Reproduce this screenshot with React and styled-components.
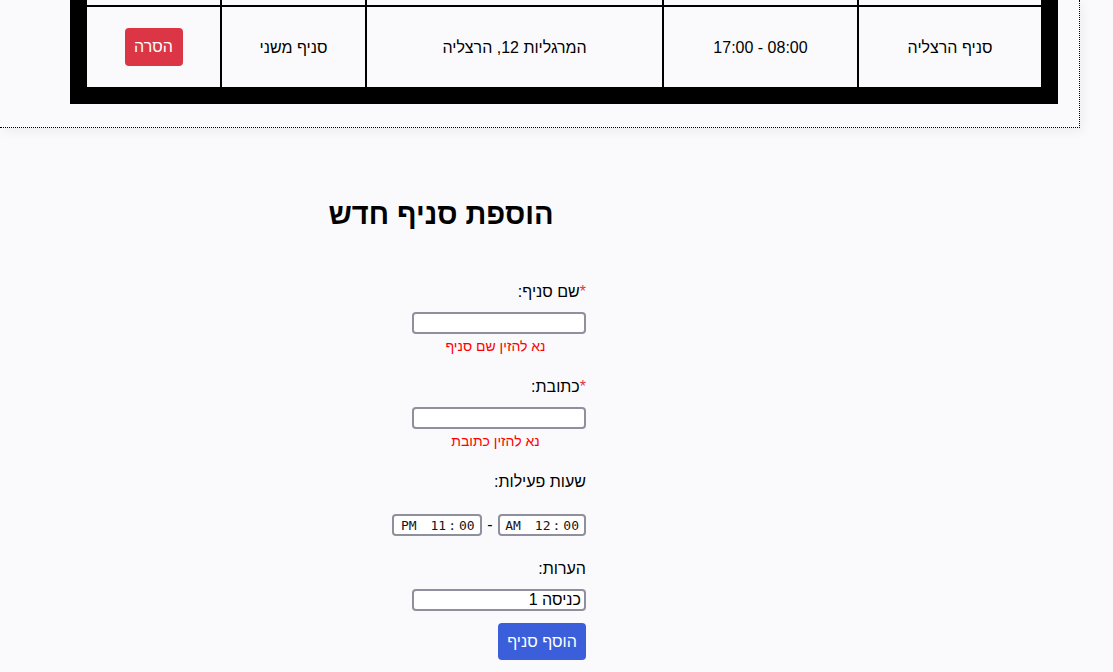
import styled, { createGlobalStyle } from "styled-components";

const GlobalStyle = createGlobalStyle`
  body {
    margin: 0;
    background: #fafafc;
    font-family: "Liberation Sans", Arial, sans-serif;
    color: #000;
  }
`;

const TableBox = styled.div`
  width: 1080px;
  box-sizing: border-box;
  padding: 0 21px 23px 70px;
  border-right: 1px dotted #000;
  border-bottom: 1px dotted #000;
  box-shadow: 3px 4px 10px rgba(0, 0, 0, 0.05);
`;

const Table = styled.table`
  direction: rtl;
  width: 988px;
  table-layout: fixed;
  border-collapse: separate;
  border-spacing: 0;
  border: 16px solid #000;
  border-top: 0;
`;

const Cell = styled.td`
  box-sizing: border-box;
  width: ${(p) => p.$w}px;
  height: ${(p) => (p.$stub ? 6 : 82)}px;
  padding: ${(p) => (p.$stub ? 0 : "2px 0 0")};
  border: 1px solid #000;
  border-top: ${(p) => (p.$stub ? 0 : "1px solid #000")};
  text-align: center;
  vertical-align: middle;
  font-size: 16px;
`;

const DangerButton = styled.button`
  width: 58px;
  height: 38px;
  margin-top: -2px;
  border: none;
  border-radius: 4px;
  background: #dc3545;
  color: #fff;
  font-family: inherit;
  font-size: 16px;
  cursor: pointer;
`;

const FormArea = styled.section`
  padding: 70px 0 40px 296px;
`;

const Form = styled.form`
  width: 290px;
  direction: rtl;
  display: flex;
  flex-direction: column;
  align-items: flex-start;
`;

const Title = styled.h2`
  align-self: stretch;
  margin: 0 0 53px;
  text-align: center;
  font-size: 29px;
  line-height: 32px;
  font-weight: bold;
`;

const Field = styled.div`
  display: flex;
  flex-direction: column;
  align-items: flex-start;
  margin-bottom: ${(p) => (p.$last ? 0 : 24)}px;
`;

const Label = styled.label`
  font-size: 16px;
  line-height: 18px;
  margin-bottom: ${(p) => p.$gap || 11}px;
`;

const Required = styled.span`
  color: #dc3545;
`;

const TextInput = styled.input`
  width: 174px;
  height: 22px;
  box-sizing: border-box;
  padding: 0 3px;
  border: 2px solid #8f8f9d;
  border-radius: 4px;
  background: #fff;
  font-family: "Liberation Sans", Arial, sans-serif;
  font-size: 16px;
  direction: rtl;
  outline: none;
`;

const ErrorText = styled.div`
  width: 174px;
  margin-top: 4px;
  padding-right: 7px;
  box-sizing: border-box;
  color: #ff0000;
  font-size: 14px;
  line-height: 16px;
  text-align: center;
`;

const TimeRow = styled.div`
  display: flex;
  align-items: center;
`;

const TimeBox = styled.div`
  width: ${(p) => p.$w}px;
  height: 22px;
  box-sizing: border-box;
  padding-right: 5px;
  border: 2px solid #8f8f9d;
  border-radius: 4px;
  background: #fff;
  direction: ltr;
  display: flex;
  align-items: center;
  justify-content: flex-end;
  font-family: "DejaVu Sans Mono", "Liberation Mono", monospace;
  font-size: 13px;
  color: #15141a;
`;

const Part = styled.span`
  margin-left: ${(p) => p.$ml || 0}px;
`;

const Dash = styled.span`
  margin: 0 5.5px;
  font-size: 16px;
`;

const AddButton = styled.button`
  margin-top: 12px;
  width: 88px;
  height: 37px;
  border: none;
  border-radius: 4px;
  background: #3b5fdb;
  color: #fff;
  font-family: inherit;
  font-size: 16px;
  cursor: pointer;
`;

const cols = [184, 195, 297, 145, 135];

const branches = [
  { name: "סניף הרצליה", hours: "08:00 - 17:00", address: "המרגליות 12, הרצליה", type: "סניף משני" },
];

const Time = ({ w, ampm, h, m }) => (
  <TimeBox $w={w}>
    <Part>{ampm}</Part>
    <Part $ml={14}>{h}</Part>
    <Part $ml={2}>:</Part>
    <Part $ml={3}>{m}</Part>
  </TimeBox>
);

export default function App() {
  return (
    <>
      <GlobalStyle />
      <TableBox>
        <Table>
          <tbody>
            <tr>
              {cols.map((w, i) => (
                <Cell key={i} $w={w} $stub />
              ))}
            </tr>
            {branches.map((b) => (
              <tr key={b.name}>
                <Cell $w={cols[0]}>{b.name}</Cell>
                <Cell $w={cols[1]}>{b.hours}</Cell>
                <Cell $w={cols[2]}>{b.address}</Cell>
                <Cell $w={cols[3]}>{b.type}</Cell>
                <Cell $w={cols[4]}>
                  <DangerButton>הסרה</DangerButton>
                </Cell>
              </tr>
            ))}
          </tbody>
        </Table>
      </TableBox>

      <FormArea>
        <Form onSubmit={(e) => e.preventDefault()}>
          <Title>הוספת סניף חדש</Title>

          <Field>
            <Label>
              <Required>*</Required>שם סניף:
            </Label>
            <TextInput type="text" />
            <ErrorText>נא להזין שם סניף</ErrorText>
          </Field>

          <Field>
            <Label>
              <Required>*</Required>כתובת:
            </Label>
            <TextInput type="text" />
            <ErrorText>נא להזין כתובת</ErrorText>
          </Field>

          <Field>
            <Label $gap={23}>שעות פעילות:</Label>
            <TimeRow>
              <Time w={88} ampm="AM" h="12" m="00" />
              <Dash>-</Dash>
              <Time w={90} ampm="PM" h="11" m="00" />
            </TimeRow>
          </Field>

          <Field $last>
            <Label>הערות:</Label>
            <TextInput type="text" defaultValue="כניסה 1" />
          </Field>

          <AddButton type="submit">הוסף סניף</AddButton>
        </Form>
      </FormArea>
    </>
  );
}
